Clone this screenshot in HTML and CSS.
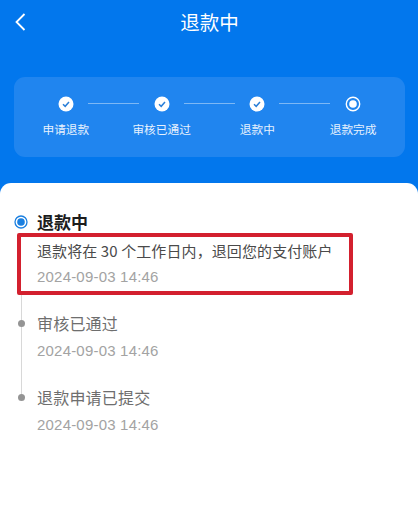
FILE: index.html
```html
<!DOCTYPE html>
<html lang="zh-CN">
<head>
  <meta charset="UTF-8" />
  <meta name="viewport" content="width=device-width, initial-scale=1.0" />
  <title>退款中</title>
  <link rel="stylesheet" href="styles.css">
</head>
<body>
  <header class="top">
    <div class="nav">
      <svg class="back" width="12" height="20" viewBox="0 0 12 20"><path d="M10.5 2 L2.5 10 L10.5 18" /></svg>
      <h1>退款中</h1>
    </div>
    <div class="steps">
      <div class="step">
        <svg class="dot" width="16" height="16" viewBox="0 0 16 16"><circle cx="8" cy="8" r="7.5" fill="#fff" /><path class="tick" d="M5 8.2 L7.2 10.3 L11 6" /></svg>
        <span>申请退款</span>
      </div>
      <div class="step">
        <svg class="dot" width="16" height="16" viewBox="0 0 16 16"><circle cx="8" cy="8" r="7.5" fill="#fff" /><path class="tick" d="M5 8.2 L7.2 10.3 L11 6" /></svg>
        <span>审核已通过</span>
      </div>
      <div class="step">
        <svg class="dot" width="16" height="16" viewBox="0 0 16 16"><circle cx="8" cy="8" r="7.5" fill="#fff" /><path class="tick" d="M5 8.2 L7.2 10.3 L11 6" /></svg>
        <span>退款中</span>
      </div>
      <div class="step last">
        <svg class="dot" width="16" height="16" viewBox="0 0 16 16"><circle cx="8" cy="8" r="6.7" fill="none" stroke="#fff" stroke-width="1.4" /><circle cx="8" cy="8" r="3.8" fill="#fff" /></svg>
        <span>退款完成</span>
      </div>
    </div>
  </header>

  <main class="card">
    <div class="current">
      <svg class="radio" width="14" height="14" viewBox="0 0 14 14"><circle cx="7" cy="7" r="6" fill="none" stroke="#1a7fe0" stroke-width="1.3" /><circle cx="7" cy="7" r="3.8" fill="#1a7fe0" /></svg>
      <h2>退款中</h2>
    </div>
    <div class="highlight">
      <p class="msg">退款将在 30 个工作日内，退回您的支付账户</p>
      <p class="time">2024-09-03 14:46</p>
    </div>
    <div class="history">
      <div class="item">
        <p class="msg grey">审核已通过</p>
        <p class="time">2024-09-03 14:46</p>
      </div>
      <div class="item">
        <p class="msg grey">退款申请已提交</p>
        <p class="time">2024-09-03 14:46</p>
      </div>
    </div>
  </main>
</body>
</html>
```

FILE: styles.css
```css
* {
  box-sizing: border-box;
}
html, body {
  height: 100%;
}
body {
  margin: 0;
  height: 516px;
  overflow: hidden;
  background: #fff;
  font-family: "Noto Sans CJK SC", "Liberation Sans", sans-serif;
  display: flex;
  flex-direction: column;
}
h1, h2, p {
  margin: 0;
  font-weight: normal;
}
.top {
  background: #0277ed;
  height: 194px;
  padding: 0 13px 0 14px;
  flex: none;
}
.nav {
  height: 77px;
  padding-top: 11px;
  display: flex;
  justify-content: center;
  position: relative;
}
.nav h1 {
  color: #fff;
  font-size: 19.5px;
  line-height: 22px;
}
.back {
  position: absolute;
  left: 0;
  top: 12px;
}
.back path {
  fill: none;
  stroke: #fff;
  stroke-width: 1.8;
}
.steps {
  height: 80px;
  background: #2085ef;
  border-radius: 11px;
  padding: 19px 4px 0;
  display: grid;
  grid-template-columns: repeat(4, 1fr);
}
.step {
  display: flex;
  flex-direction: column;
  align-items: center;
  gap: 9px;
  position: relative;
  color: #e6f1fe;
  font-size: 11.7px;
  line-height: 16px;
}
.step::after {
  content: "";
  position: absolute;
  top: 7px;
  left: calc(50% + 22px);
  width: 51px;
  height: 1px;
  background: #7db8f5;
}
.step.last::after {
  display: none;
}
.tick {
  fill: none;
  stroke: #2a7fd8;
  stroke-width: 1.5;
}
.card {
  flex: 1;
  margin-top: -11px;
  background: #fff;
  border-radius: 11px 11px 0 0;
  padding: 27px 0 0 14px;
}
.current {
  display: flex;
  align-items: center;
  gap: 9px;
  height: 23px;
}
.current h2 {
  font-size: 17px;
  font-weight: bold;
  color: #1c1c1c;
}
.highlight {
  width: 336px;
  height: 62px;
  margin: 0 0 0 3px;
  padding: 4px 0 0 16px;
  border: 4px solid #d3202e;
  border-radius: 2px;
}
.msg {
  font-size: 15px;
  letter-spacing: 0.1px;
  line-height: 20px;
  color: #4a4a4a;
  white-space: nowrap;
}
.msg.grey {
  font-size: 16px;
  letter-spacing: 0.2px;
  line-height: 20px;
  color: #6e6e6e;
}
.time {
  font-family: "Liberation Sans", sans-serif;
  font-size: 15px;
  letter-spacing: 0.2px;
  line-height: 18px;
  margin-top: 7px;
  color: #a3a3a3;
}
.grey + .time {
  margin-top: 9px;
}
.history {
  margin-left: 6px;
  padding: 18px 0 0 17px;
  position: relative;
}
.history::before {
  content: "";
  position: absolute;
  left: 1px;
  top: 0;
  height: 103px;
  width: 1px;
  background: #d8d8d8;
}
.item {
  position: relative;
  height: 74px;
}
.item::before {
  content: "";
  position: absolute;
  left: -19px;
  top: 7px;
  width: 7px;
  height: 7px;
  border-radius: 50%;
  background: #949494;
}
```
